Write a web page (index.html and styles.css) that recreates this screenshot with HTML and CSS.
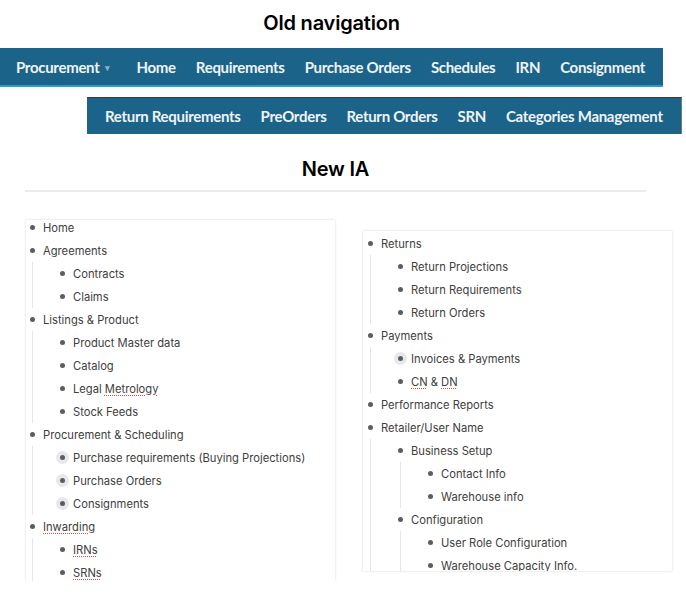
FILE: index.html
```html
<!DOCTYPE html>
<html>
<head>
<meta charset="utf-8">
<link rel="stylesheet" href="styles.css">
</head>
<body>
<div class="old">
  <h1 class="title">Old navigation</h1>
  <nav class="bar bar-main">
    <a class="item">Procurement <span class="caret">&#9662;</span></a>
    <a class="item">Home</a>
    <a class="item">Requirements</a>
    <a class="item">Purchase Orders</a>
    <a class="item">Schedules</a>
    <a class="item">IRN</a>
    <a class="item">Consignment</a>
  </nav>
</div>
<nav class="bar bar-sub">
  <a class="item">Return Requirements</a>
  <a class="item">PreOrders</a>
  <a class="item">Return Orders</a>
  <a class="item">SRN</a>
  <a class="item">Categories Management</a>
</nav>

<div class="newia">
  <h1 class="title title-new">New IA</h1>
  <div class="divider"></div>
</div>

<div class="cards">
  <div class="card card-left">
    <ul class="tree">
      <li><span class="row"><span class="dot"></span><span class="lbl">Home</span></span></li>
      <li><span class="row"><span class="dot"></span><span class="lbl">Agreements</span></span>
        <ul class="tree sub">
          <li><span class="row"><span class="dot"></span><span class="lbl">Contracts</span></span></li>
          <li><span class="row"><span class="dot"></span><span class="lbl">Claims</span></span></li>
        </ul>
      </li>
      <li><span class="row"><span class="dot"></span><span class="lbl">Listings &amp; Product</span></span>
        <ul class="tree sub">
          <li><span class="row"><span class="dot"></span><span class="lbl">Product Master data</span></span></li>
          <li><span class="row"><span class="dot"></span><span class="lbl">Catalog</span></span></li>
          <li><span class="row"><span class="dot"></span><span class="lbl">Legal <span class="spell">Metrology</span></span></span></li>
          <li><span class="row"><span class="dot"></span><span class="lbl">Stock Feeds</span></span></li>
        </ul>
      </li>
      <li><span class="row"><span class="dot"></span><span class="lbl">Procurement &amp; Scheduling</span></span>
        <ul class="tree sub">
          <li><span class="row"><span class="dot hl"></span><span class="lbl">Purchase requirements (Buying Projections)</span></span></li>
          <li><span class="row"><span class="dot hl"></span><span class="lbl">Purchase Orders</span></span></li>
          <li><span class="row"><span class="dot hl"></span><span class="lbl">Consignments</span></span></li>
        </ul>
      </li>
      <li><span class="row"><span class="dot"></span><span class="lbl"><span class="spell">Inwarding</span></span></span>
        <ul class="tree sub">
          <li><span class="row"><span class="dot"></span><span class="lbl"><span class="spell">IRNs</span></span></span></li>
          <li><span class="row"><span class="dot"></span><span class="lbl"><span class="spell">SRNs</span></span></span></li>
        </ul>
      </li>
    </ul>
  </div>

  <div class="card card-right">
    <ul class="tree">
      <li><span class="row"><span class="dot"></span><span class="lbl">Returns</span></span>
        <ul class="tree sub">
          <li><span class="row"><span class="dot"></span><span class="lbl">Return Projections</span></span></li>
          <li><span class="row"><span class="dot"></span><span class="lbl">Return Requirements</span></span></li>
          <li><span class="row"><span class="dot"></span><span class="lbl">Return Orders</span></span></li>
        </ul>
      </li>
      <li><span class="row"><span class="dot"></span><span class="lbl">Payments</span></span>
        <ul class="tree sub">
          <li><span class="row"><span class="dot hl"></span><span class="lbl">Invoices &amp; Payments</span></span></li>
          <li><span class="row"><span class="dot"></span><span class="lbl"><span class="spell">CN</span> &amp; <span class="spell">DN</span></span></span></li>
        </ul>
      </li>
      <li><span class="row"><span class="dot"></span><span class="lbl">Performance Reports</span></span></li>
      <li><span class="row"><span class="dot"></span><span class="lbl">Retailer/User Name</span></span>
        <ul class="tree sub">
          <li><span class="row"><span class="dot"></span><span class="lbl">Business Setup</span></span>
            <ul class="tree sub">
              <li><span class="row"><span class="dot"></span><span class="lbl">Contact Info</span></span></li>
              <li><span class="row"><span class="dot"></span><span class="lbl">Warehouse info</span></span></li>
            </ul>
          </li>
          <li><span class="row"><span class="dot"></span><span class="lbl">Configuration</span></span>
            <ul class="tree sub">
              <li><span class="row"><span class="dot"></span><span class="lbl">User Role Configuration</span></span></li>
              <li><span class="row"><span class="dot"></span><span class="lbl">Warehouse Capacity Info.</span></span></li>
            </ul>
          </li>
        </ul>
      </li>
    </ul>
  </div>
</div>
</body>
</html>
```
FILE: styles.css
```css
* { box-sizing: border-box; }
html, body { margin: 0; padding: 0; background: #fff; }
body { font-family: Inter, "Liberation Sans", sans-serif; }

.old { width: 663px; }

.title {
  margin: 0;
  padding: 11px 0 13px;
  font-size: 20px;
  line-height: 24px;
  font-weight: 600;
  color: #000;
  text-align: center;
  letter-spacing: -0.2px;
}

.bar {
  display: flex;
  align-items: center;
  background: #1c6389;
  font-family: Lato, "Liberation Sans", sans-serif;
  font-weight: 700;
  font-size: 15px;
  color: #eef3f6;
  letter-spacing: -0.3px;
}
.bar-main {
  height: 39px;
  padding-left: 6px;
  border-bottom: 2px solid #2e9bd0;
}
.bar-sub {
  margin: 10px 0 0 87px;
  width: 595px;
  height: 37px;
  padding-left: 8px;
  border-top: 1px solid #3b3b3b;
  border-right: 1px solid #6a7c86;
}
.item { padding: 0 10px; white-space: nowrap; }
.caret { color: #8fb0c4; font-size: 9px; margin-left: 2px; vertical-align: 2px; }
.bar-main .item:first-child { padding-right: 17px; }

.newia { margin: 0 40px 0 25px; }
.title-new { padding: 23px 0 0; }
.divider { height: 2px; background: #ececec; margin-top: 9px; }

.cards { display: flex; align-items: flex-start; }
.card {
  width: 309px;
  background: #fff;
  box-shadow: 0 0 2px rgba(0,0,0,0.18);
  overflow: hidden;
}
.card-left { margin: 28px 0 0 26px; height: 361px; }
.card-right { margin: 39px 0 0 28px; height: 340px; }
.card-left > .tree { margin-top: -4px; }
.card-right > .tree { margin-top: 1px; padding-left: 1px; }

.tree { list-style: none; margin: 0; padding: 0; }
.tree.sub {
  margin-left: 6px;
  padding-left: 23px;
  border-left: 1px solid #e6e6e6;
}
.row {
  display: flex;
  align-items: center;
  height: 23px;
  font-size: 11.2px;
  color: #404040;
  white-space: nowrap;
}
.dot {
  position: relative;
  flex: none;
  width: 13px;
  height: 13px;
  border-radius: 50%;
  margin-right: 4px;
}
.dot::after {
  content: "";
  position: absolute;
  left: 4px;
  top: 4px;
  width: 5px;
  height: 5px;
  border-radius: 50%;
  background: #5b5d60;
}
.dot.hl { background: #e6e8eb; }
.spell {
  text-decoration-line: underline;
  text-decoration-style: dotted;
  text-decoration-color: #f0463c;
  text-decoration-thickness: 1px;
  text-underline-offset: 2px;
}
```
